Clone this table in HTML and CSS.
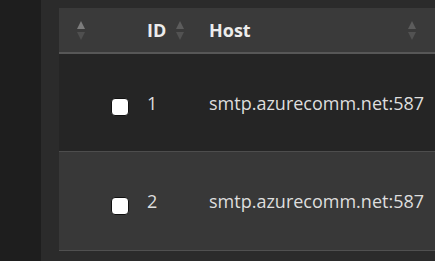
FILE: index.html
```html
<!DOCTYPE html>
<html lang="en">

<head>
    <meta charset="UTF-8">
    <meta name="viewport" content="width=device-width, initial-scale=1.0">
    <title>Relays</title>
    <link rel="stylesheet" href="styles.css">
</head>

<body>
    <div class="layout">
        <aside class="sidebar"></aside>

        <main class="content">
            <div class="table">
                <div class="row head">
                    <div class="cell sel-col">
                        <span class="sort asc"><i class="up"></i><i class="down"></i></span>
                    </div>
                    <div class="cell id-col">
                        <span>ID</span>
                        <span class="sort"><i class="up"></i><i class="down"></i></span>
                    </div>
                    <div class="cell host-col">
                        <span>Host</span>
                        <span class="sort"><i class="up"></i><i class="down"></i></span>
                    </div>
                </div>

                <div class="row odd">
                    <div class="cell sel-col"><span class="check"></span></div>
                    <div class="cell id-col">1</div>
                    <div class="cell host-col">smtp.azurecomm.net:587</div>
                </div>

                <div class="row even">
                    <div class="cell sel-col"><span class="check"></span></div>
                    <div class="cell id-col">2</div>
                    <div class="cell host-col">smtp.azurecomm.net:587</div>
                </div>
            </div>
        </main>
    </div>
</body>
</html>
```

FILE: styles.css
```css
body {
    font-family: 'Open Sans', 'Noto Sans', sans-serif;
    background-color: #2b2b2b;
    color: #dedede;
    margin: 0;
    padding: 0;
    overflow: hidden;
}

.layout {
    display: flex;
    height: 261px;
}

.sidebar {
    width: 41px;
    flex-shrink: 0;
    background-color: #1e1e1e;
}

.content {
    flex: 1;
    padding: 8px 0 0 18px;
}

/* table */
.row {
    display: grid;
    grid-template-columns: 78px 62px 1fr;
}

.row.head {
    height: 44px;
    background-color: #3a3a3a;
    border-bottom: 2px solid #575757;
    font-weight: 700;
    color: #ececec;
}

.row.odd {
    height: 97px;
    background-color: #252525;
    border-bottom: 1px solid #4d4d4d;
}

.row.even {
    height: 98px;
    background-color: #383838;
    border-bottom: 1px solid #505050;
}

.cell {
    display: flex;
    align-items: center;
    font-size: 18px;
    padding-left: 10px;
}

.head .sel-col {
    padding-left: 18px;
}

.head .id-col span:first-child {
    margin-right: 10px;
}

.head .host-col {
    justify-content: space-between;
    padding-right: 18px;
}

.row .sel-col {
    justify-content: flex-end;
    padding-right: 8px;
}

.head .sel-col {
    justify-content: flex-start;
}

.check {
    width: 16px;
    height: 16px;
    margin-top: 9px;
    background-color: #ffffff;
    border: 1px solid #111111;
    border-radius: 4px;
}

/* sort arrows */
.sort {
    display: flex;
    flex-direction: column;
    gap: 3px;
    width: 9px;
}

.sort i {
    width: 0;
    height: 0;
    border-left: 4.5px solid transparent;
    border-right: 4.5px solid transparent;
}

.sort .up {
    border-bottom: 8px solid #5c5c5c;
}

.sort .down {
    border-top: 8px solid #525252;
}

.sort.asc .up {
    border-bottom-color: #7c7c7c;
}

.sort.asc .down {
    border-top-color: #4f4f4f;
}
```
